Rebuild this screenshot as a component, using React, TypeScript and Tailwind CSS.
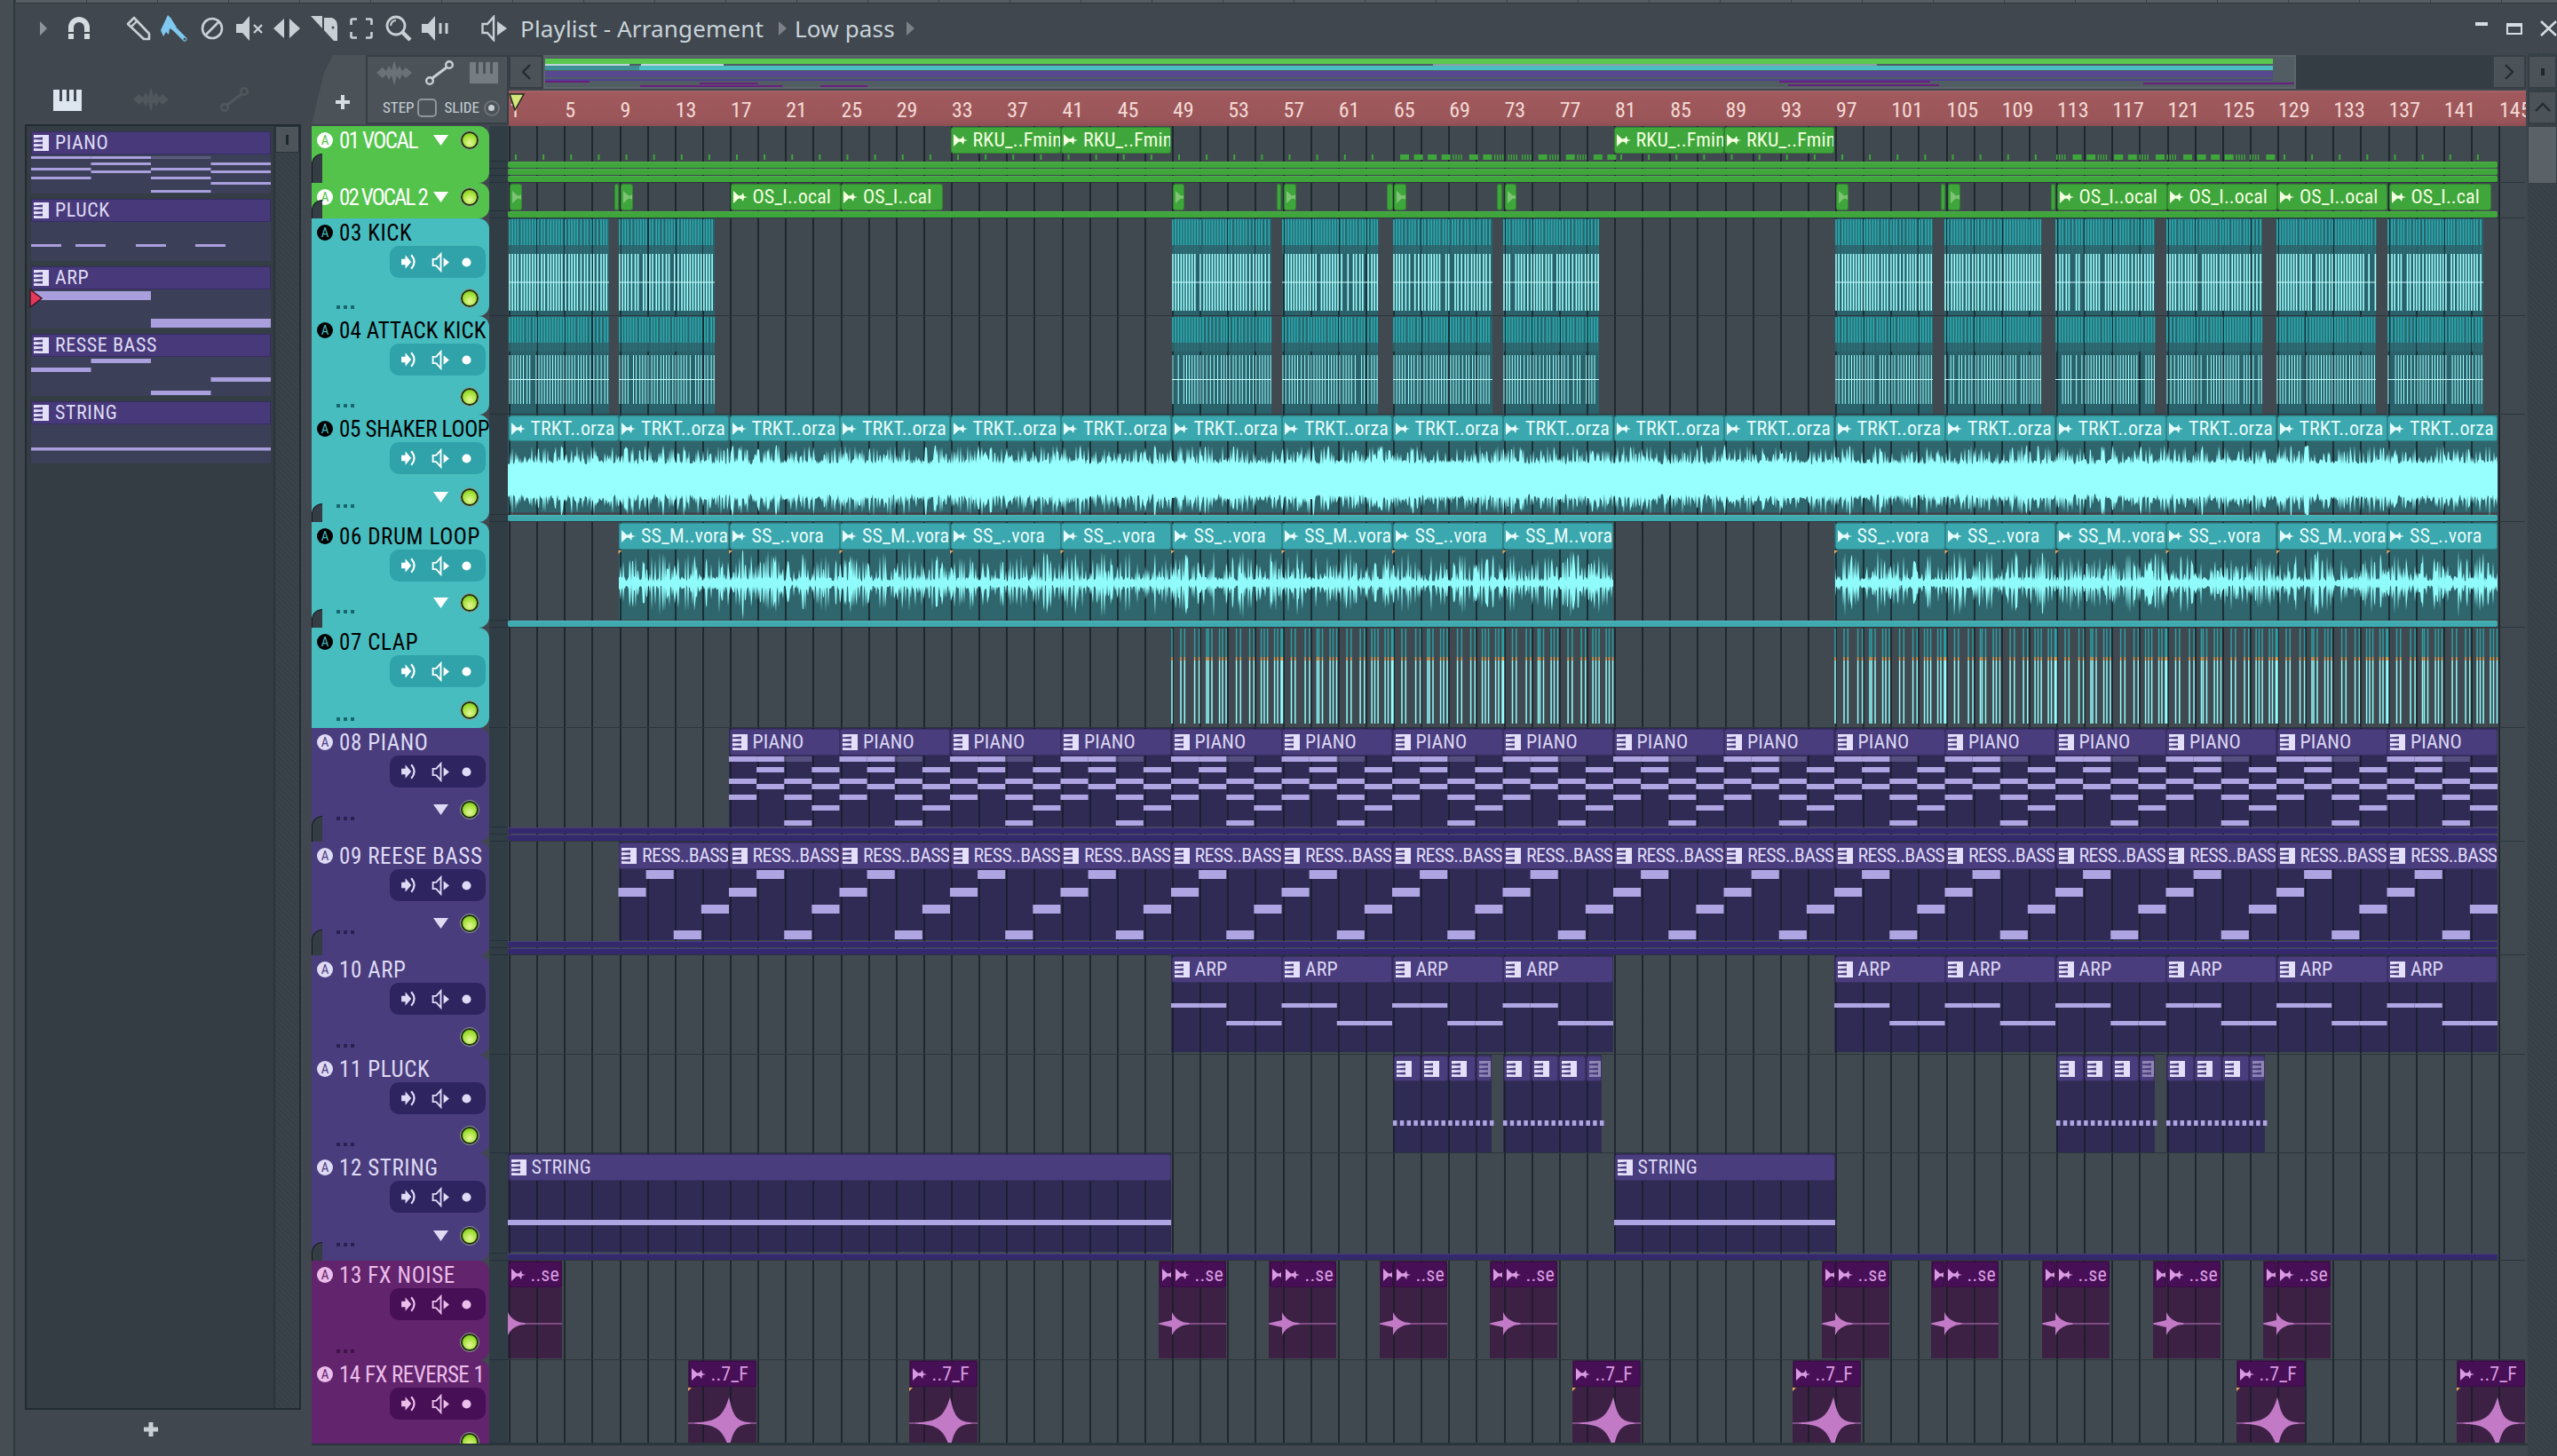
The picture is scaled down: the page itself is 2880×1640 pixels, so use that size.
import React from "react";

const BAR = 15.5625;
const CLIP8 = 124.5;
const bx = (b: number) => (b - 1) * BAR;
const NARROW = "font-['Roboto',sans-serif] [font-stretch:76%]";
const rng = (seed: number) => {
  let s = seed;
  return () => {
    s = (s * 16807) % 2147483647;
    return (s & 0xffff) / 65535;
  };
};

type ThemeKey = "green" | "teal" | "purple" | "magenta";
const THEMES: Record<ThemeKey, any> = {
  green: {
    bg: "bg-[#54c34b]", text: "text-white", badge: "bg-white text-[#54c34b]", panel: "", head: "bg-[#3ea63b]", icon: "text-white", dots: "bg-black",
    clipText: "text-[#f4ffe0]", body: "bg-[#3ea63b]", line: "bg-[#3ea63b]", fill: "#f4ffe0",
  },
  teal: {
    bg: "bg-[#47bdc0]", text: "text-black", badge: "bg-black text-[#47bdc0]", panel: "bg-[#2fa3a9]", head: "bg-[#3aa8ae]", icon: "text-white", dots: "bg-[#17686c]",
    clipText: "text-[#e6fbfb]", body: "bg-[#2f666d]", line: "bg-[#3fabb0]", fill: "#e6fbfb",
  },
  purple: {
    bg: "bg-[#4a3d7d]", text: "text-[#dfdbf5]", badge: "bg-[#dfdbf5] text-[#4a3d7d]", panel: "bg-[#2d2460]", head: "bg-[#4a3d7d]", icon: "text-[#dfdbf5]", dots: "bg-[#2a2150]",
    clipText: "text-[#dcd7f5]", body: "bg-[#302b55]", line: "bg-[#35296e]", fill: "#e4e0fa",
  },
  magenta: {
    bg: "bg-[#62246c]", text: "text-[#ebbeeb]", badge: "bg-[#ebbeeb] text-[#62246c]", panel: "bg-[#470f55]", head: "bg-[#470f55]", icon: "text-[#ebbeeb]", dots: "bg-[#41124a]",
    clipText: "text-[#d89ae0]", body: "bg-[#3d2145]", line: "bg-[#470f55]", fill: "#d89ae0",
  },
};

type Clip = { x: number; w: number; label?: string; icon?: "audio" | "piano"; dim?: boolean; noHead?: boolean };

const AudioIcon = ({ fill, dim }: { fill: string; dim?: boolean }) => (
  <svg width="16" height="14" viewBox="0 0 16 14" className="shrink-0" style={{ opacity: dim ? 0.35 : 1 }}>
    <path d="M0 0 L6 5.5 L9 5 L11 2 L12 6 L16 7 L12 8 L11 12 L9 9 L6 8.5 L0 14Z" fill={fill} />
  </svg>
);
const PianoIcon = ({ fill, dim }: { fill: string; dim?: boolean }) => (
  <svg width="17" height="18" viewBox="0 0 17 18" className="shrink-0" style={{ opacity: dim ? 0.45 : 1 }}>
    <path fillRule="evenodd" d="M0 0H17V18H0Z M0 3.5L10 2.5V5.5L0 5Z M0 8.5L10 7.5V10.5L0 10Z M0 13.5L10 12.5V15.5L0 15Z" fill={fill} />
  </svg>
);

const seq = (start: number, n: number, label: string | ((i: number) => string), icon: "audio" | "piano", step = CLIP8): Clip[] =>
  Array.from({ length: n }, (_, i) => ({ x: start + i * step, w: step, label: typeof label === "string" ? label : label(i), icon }));

const KICK_X: [number, number][] = [
  [1, 113], [125, 108], [748, 112], [872, 108], [997, 112], [1121, 108], [1495, 110], [1618, 109], [1743, 112], [1868, 108], [1992, 112], [2117, 108],
];

const kickDraw = (seed: number, y1: number, y2: number, sw: number) => {
  const r = rng(seed);
  let head = "", band = "", bright = "", mid = "";
  KICK_X.forEach(([x0, w]) => {
    let x = x0 + 1;
    while (x < x0 + w) {
      const tall = r() > 0.06;
      head += `M${x.toFixed(1)} 1V30`;
      band += `M${x.toFixed(1)} 30V40`;
      if (tall) bright += `M${x.toFixed(1)} ${y1}V${y2}`;
      x += r() > 0.75 ? 4.1 : 3.1;
    }
    mid += `M${x0} ${(y1 + y2) / 2}H${x0 + w}`;
  });
  return (
    <>
      <path d={head} stroke="#2aa8ad" strokeWidth="1.8" />
      <path d={band} stroke="#2f6f77" strokeWidth="1.6" />
      <path d={bright} stroke="#9dffff" strokeWidth={sw} />
      <path d={mid} stroke="#c8ffff" strokeWidth="1" />
    </>
  );
};

const CLAP = [0, 10, 14.3, 25.6, 30.6, 39, 41, 45, 53.6, 57, 61, 72.6, 77.3, 87.6, 92.3, 100.6, 104, 107.6, 115.6, 119, 123];
const clapDraw = () => {
  let a = "", o = "", b = "";
  [[748, 4], [1495, 6]].forEach(([x0, n]) => {
    for (let p = 0; p < n; p++) {
      CLAP.forEach((c) => {
        const x = (x0 + p * CLIP8 + c).toFixed(1);
        a += `M${x} 1V33`;
        o += `M${x} 33V37`;
        b += `M${x} 37V108`;
      });
    }
  });
  return (
    <>
      <path d={a} stroke="#2aa0a6" strokeWidth="1.5" />
      <path d={o} stroke="#d9a050" strokeWidth="1.5" />
      <path d={b} stroke="#90ffff" strokeWidth="1.5" />
    </>
  );
};

const wavePath = (ranges: [number, number][], cy: number, amp: (x: number, r: () => number) => number, seed: number) => {
  const r = rng(seed);
  let d = "";
  ranges.forEach(([x0, x1]) => {
    const top: string[] = [];
    const bot: string[] = [];
    for (let x = x0; x <= x1; x += 1) {
      const a = amp(x - x0, r);
      top.push(`${x.toFixed(1)} ${(cy - a).toFixed(1)}`);
      bot.unshift(`${x.toFixed(1)} ${(cy + a * (0.8 + r() * 0.3)).toFixed(1)}`);
    }
    d += "M" + top.concat(bot).join("L") + "Z";
  });
  return d;
};

const notePieces = (xs: number[], rows: [number, number, number, number?][]) => {
  const out: React.ReactNode[] = [];
  xs.forEach((x0, i) =>
    rows.forEach(([cx, y, h, op], j) =>
      out.push(<rect key={`${i}-${j}`} x={x0 + cx * 31.125} y={y} width={31.125} height={h} fill="#b0a5e3" opacity={op ?? 1} />)
    )
  );
  return out;
};

const xs = (cl: Clip[]) => cl.map((c) => c.x);

const PIANO_CLIPS = seq(bx(17), 16, "PIANO", "piano");
const REESE_CLIPS = seq(bx(9), 17, "RESS..BASS", "piano");
const ARP_CLIPS = [...seq(bx(49), 4, "ARP", "piano"), ...seq(bx(97), 6, "ARP", "piano")];
const PLUCK_CLIPS: Clip[] = [997, 1121, 1744, 1868].flatMap((g) =>
  [0, 1, 2, 3].map((i) => ({ x: g + i * 31.125, w: i === 3 ? 18 : 31.125, icon: "piano" as const, dim: i === 3 }))
);
const NOISE_X = [748, 872, 997, 1121, 1495, 1618, 1743, 1868, 1992];
const NOISE_CLIPS: Clip[] = [
  { x: 0, w: 61, label: "..se", icon: "audio" },
  ...NOISE_X.flatMap((x) => [
    { x: x - 15, w: 15, icon: "audio" as const },
    { x, w: 61, label: "..se", icon: "audio" as const },
  ]),
];
const REV_X = [203, 452, 1199, 1447, 1947, 2195];
const REV_CLIPS: Clip[] = REV_X.map((x) => ({ x, w: 77, label: "..7_F", icon: "audio" as const }));

const SHAKER: Clip[] = seq(0, 18, "TRKT..orza", "audio");
const DRUM_L1 = ["SS_M..vora", "SS_..vora", "SS_M..vora", "SS_..vora", "SS_..vora", "SS_..vora", "SS_M..vora", "SS_..vora", "SS_M..vora"];
const DRUM_L2 = ["SS_..vora", "SS_..vora", "SS_M..vora", "SS_..vora", "SS_M..vora", "SS_..vora"];
const DRUM: Clip[] = [...seq(bx(9), 9, (i) => DRUM_L1[i], "audio"), ...seq(bx(105) - 124.5, 6, (i) => DRUM_L2[i], "audio")];

const VOCAL2: Clip[] = [
  { x: 1, w: 15, icon: "audio", dim: true }, { x: 119, w: 6 }, { x: 126, w: 15, icon: "audio", dim: true },
  { x: 250, w: 124.5, label: "OS_I..ocal", icon: "audio" }, { x: 374.5, w: 115.5, label: "OS_I..cal", icon: "audio" },
  { x: 748, w: 14, icon: "audio", dim: true }, { x: 865, w: 6 }, { x: 873, w: 15, icon: "audio", dim: true },
  { x: 989, w: 8 }, { x: 997, w: 15, icon: "audio", dim: true }, { x: 1113, w: 7 }, { x: 1122, w: 14, icon: "audio", dim: true },
  { x: 1495, w: 15, icon: "audio", dim: true }, { x: 1613, w: 6 }, { x: 1621, w: 15, icon: "audio", dim: true }, { x: 1737, w: 6 },
  { x: 1744, w: 124.5, label: "OS_I..ocal", icon: "audio" }, { x: 1868, w: 124.5, label: "OS_I..ocal", icon: "audio" },
  { x: 1992.5, w: 124.5, label: "OS_I..ocal", icon: "audio" }, { x: 2118, w: 116, label: "OS_I..cal", icon: "audio" },
];

const ticksDraw = () => {
  const r = rng(77);
  const out: React.ReactNode[] = [];
  for (let x = 8; x < 2220; x += 31.125) {
    const dense = (x > 1000 && x < 1240) || (x > 1740 && x < 1985);
    if (!dense) out.push(<rect key={x} x={x} y={32} width={2} height={6} fill="#3ea63b" />);
  }
  [[1002, 1238], [1744, 1984]].forEach(([a, b]) => {
    for (let x = a; x < b; x += 15.56) {
      const k = r();
      if (k > 0.3) out.push(<rect key={`d${x}`} x={x + 3} y={32} width={10} height={6} fill="#3ea63b" />);
      else
        [0, 3, 6, 9].forEach((o) => out.push(<rect key={`d${x}-${o}`} x={x + o} y={32} width={1.5} height={6} fill="#3ea63b" />));
    }
  });
  return out;
};

const noisePath = (x: number, w: number, cy: number, up: number) => {
  let d = `M${x} ${cy - up}`;
  const n = 30;
  for (let i = 1; i <= n; i++) {
    const t = i / n;
    const a = Math.max(0.5, up * Math.exp(-t * 9));
    d += `L${(x + t * w).toFixed(1)} ${(cy - a).toFixed(1)}`;
  }
  for (let i = n; i >= 0; i--) {
    const t = i / n;
    const a = Math.max(0.5, up * Math.exp(-t * 9));
    d += `L${(x + t * w).toFixed(1)} ${(cy + a).toFixed(1)}`;
  }
  return d + "Z";
};
const revPath = (x: number, w: number, cy: number) => {
  const peak = x + w * 0.6;
  const f = (px: number) => {
    const p = px < peak ? peak - px : (px - peak) * 1.6;
    return Math.max(0.6, 21 * Math.exp(-p / 7) + 9 * Math.exp(-p / 14));
  };
  let top = "", bot = "";
  for (let px = x; px <= x + w; px += 1) {
    top += `L${px.toFixed(1)} ${(cy - f(px)).toFixed(1)}`;
    bot = `L${px.toFixed(1)} ${(cy + f(px)).toFixed(1)}` + bot;
  }
  return `M${x} ${cy}` + top + bot + "Z";
};

type Track = {
  num: string; name: string; theme: ThemeKey; h: number; panel: boolean; arrow: boolean; notch: number; lines: number;
  clips: Clip[]; headH: number; bodyH: number; draw?: React.ReactNode; fullH?: number; ls?: number;
};

const TRACKS: Track[] = [
  {
    num: "01", name: "VOCAL", theme: "green", h: 64, panel: false, arrow: true, notch: 33, lines: 3, headH: 31, bodyH: 0, ls: -1.5,
    clips: [...seq(bx(33), 2, "RKU_..Fmin", "audio"), ...seq(bx(81), 2, "RKU_..Fmin", "audio")], draw: ticksDraw(),
  },
  { num: "02", name: "VOCAL 2", theme: "green", h: 40, panel: false, arrow: true, notch: 21, lines: 1, headH: 31, bodyH: 0, clips: VOCAL2, ls: -1.9 },
  {
    num: "03", name: "KICK", theme: "teal", h: 110, panel: true, arrow: false, notch: 0, lines: 0, headH: 0, bodyH: 110,
    clips: KICK_X.map(([x, w]) => ({ x, w, noHead: true })), draw: kickDraw(12345, 40, 104, 1.6),
  },
  {
    num: "04", name: "ATTACK KICK", theme: "teal", h: 111, panel: true, arrow: false, notch: 0, lines: 0, headH: 0, bodyH: 111, ls: 0.1,
    clips: KICK_X.map(([x, w]) => ({ x, w, noHead: true })), draw: kickDraw(4242, 44, 99, 1),
  },
  {
    num: "05", name: "SHAKER LOOP", theme: "teal", h: 121, panel: true, arrow: true, notch: 21, lines: 1, headH: 30, bodyH: 110, clips: SHAKER, ls: -0.3,
    draw: <path fill="#98ffff" d={wavePath([[0, 2241]], 74, (x, r) => (r() > 0.6 ? 25 + r() * 15 : 18 + r() * 6), 999)} />,
  },
  {
    num: "06", name: "DRUM LOOP", theme: "teal", h: 119, panel: true, arrow: true, notch: 21, lines: 1, headH: 31, bodyH: 110, clips: DRUM,
    draw: (
      <>
        <path fill="#90fbfb" d={wavePath([[125, 1245], [1495, 2241]], 69, (x, r) => {
          const e = 0.5 + 0.5 * Math.abs(Math.sin((x / 31.125) * Math.PI));
          return r() > 0.55 ? 8 + r() * 30 * e : 2 + r() * 6;
        }, 555)} />
        {DRUM.map((c) => <path key={c.x} d={`M${c.x} 32h4l-4 4Z`} fill="#e8a55c" />)}
      </>
    ),
  },
  {
    num: "07", name: "CLAP", theme: "teal", h: 113, panel: true, arrow: false, notch: 0, lines: 0, headH: 0, bodyH: 0, clips: [], draw: clapDraw(),
  },
  {
    num: "08", name: "PIANO", theme: "purple", h: 128, panel: true, arrow: true, notch: 29, lines: 2, headH: 31, bodyH: 111, clips: PIANO_CLIPS,
    draw: notePieces(xs(PIANO_CLIPS), [
      [0, 32, 6], [1, 32, 6], [2, 32, 6, 0.3], [1, 44, 6], [3, 44, 6], [0, 57, 6], [2, 57, 6], [1, 63, 6], [3, 63, 6], [0, 75, 6], [2, 75, 6], [3, 87, 6], [2, 104, 6],
    ]),
  },
  {
    num: "09", name: "REESE BASS", theme: "purple", h: 128, panel: true, arrow: true, notch: 29, lines: 2, headH: 31, bodyH: 111, clips: REESE_CLIPS,
    draw: notePieces(xs(REESE_CLIPS), [[0, 52, 10], [1, 32, 10], [2, 100, 10], [3, 71, 10]]),
  },
  {
    num: "10", name: "ARP", theme: "purple", h: 112, panel: true, arrow: false, notch: 0, lines: 0, headH: 31, bodyH: 109, clips: ARP_CLIPS,
    draw: notePieces(xs(ARP_CLIPS), [[0, 54, 5], [1, 54, 5], [2, 74, 5], [3, 74, 5]]),
  },
  {
    num: "11", name: "PLUCK", theme: "purple", h: 111, panel: true, arrow: false, notch: 0, lines: 0, headH: 30, bodyH: 111, clips: PLUCK_CLIPS,
    draw: PLUCK_CLIPS.flatMap((c) =>
      [0, 1, 2, 3].filter((i) => i * 7.78 < c.w).map((i) => (
        <rect key={`${c.x}-${i}`} x={c.x + i * 7.78} y={74} width={4.5} height={6} fill="#b0a5e3" />
      ))
    ),
  },
  {
    num: "12", name: "STRING", theme: "purple", h: 121, panel: true, arrow: true, notch: 21, lines: 1, headH: 31, bodyH: 111,
    clips: [{ x: 0, w: 747, label: "STRING", icon: "piano" }, { x: 1246, w: 249, label: "STRING", icon: "piano" }],
    draw: (
      <>
        <rect x={0} y={75} width={747} height={6} fill="#b0a5e3" />
        <rect x={1246} y={75} width={249} height={6} fill="#b0a5e3" />
      </>
    ),
  },
  {
    num: "13", name: "FX NOISE", theme: "magenta", h: 112, panel: true, arrow: false, notch: 0, lines: 0, headH: 30, bodyH: 110, clips: NOISE_CLIPS,
    draw: (
      <>
        <path d={noisePath(0, 61, 71, 13)} fill="#c27ac6" />
        {NOISE_X.map((x) => <path key={x} d={noisePath(x, 61, 71, 13)} fill="#c27ac6" />)}
        {NOISE_X.map((x) => <path key={`t${x}`} d={`M${x - 15} 70.5L${x} 67V75L${x - 15} 71.5Z`} fill="#c27ac6" />)}
      </>
    ),
  },
  {
    num: "14", name: "FX REVERSE 1", theme: "magenta", h: 94, fullH: 112, panel: true, arrow: false, notch: 0, lines: 0, headH: 30, bodyH: 94, clips: REV_CLIPS, ls: -0.5,
    draw: (
      <>
        {REV_CLIPS.map((c) => <path key={c.x} d={revPath(c.x, c.w, 71)} fill="#c27ac6" />)}
        {REV_CLIPS.map((c) => <path key={`o${c.x}`} d={`M${c.x} 31h4l-4 4Z`} fill="#e8a55c" />)}
      </>
    ),
  },
];

const Led = () => (
  <div className="w-[20px] h-[20px] rounded-full shrink-0 border-[2px] border-[#20300f] outline outline-1 outline-[#8a9a90] bg-[radial-gradient(circle_at_50%_70%,#e4f79a_0%,#a6e23a_55%,#6fb81a_100%)]" />
);

const Arrow = () => (
  <svg width="17" height="12" viewBox="0 0 17 12" className="shrink-0 fill-current">
    <path d="M0 0H17L8.5 12Z" />
  </svg>
);

const MiniIcons = () => (
  <div className="flex items-center w-full pl-[12px] fill-current stroke-current">
    <svg width="20" height="20" viewBox="0 0 18 18">
      <path d="M1 6H5V2L11 9L5 16V12H1Z" stroke="none" />
      <path d="M11 2Q17 9 11 16" fill="none" strokeWidth="2" />
    </svg>
    <svg width="21" height="23" viewBox="0 0 20 22" className="ml-[15px]">
      <path d="M1.5 7.5H5L10 2V20L5 14.5H1.5Z" fill="none" strokeWidth="1.8" />
      <path d="M13 6L19 11L13 16Z" stroke="none" />
    </svg>
    <svg width="11" height="11" viewBox="0 0 12 12" className="ml-[13px]">
      <circle cx="6" cy="6" r="5.5" stroke="none" />
    </svg>
  </div>
);

const Header = ({ t }: { t: Track }) => {
  const th = THEMES[t.theme];
  const fullH = t.fullH ?? t.h;
  return (
    <div className={`relative w-[200px] rounded-r-[12px] overflow-hidden flex flex-col shrink-0 ${th.bg} ${th.text}`} style={{ height: fullH }}>
      <div className="flex items-center h-[30px] pl-[6px] mt-px shrink-0">
        <div className={`w-[18px] h-[18px] rounded-full flex items-center justify-center text-[15px] shrink-0 ${th.badge} ${NARROW}`}>A</div>
        <span className={`ml-[7px] text-[25px] leading-none whitespace-nowrap ${NARROW}`} style={{ letterSpacing: t.ls ?? 0.6 }}>
          {t.num} {t.name}
        </span>
        {!t.panel && (
          <div className="ml-auto mr-[12px] flex items-center gap-[14px]">
            <Arrow />
            <Led />
          </div>
        )}
      </div>
      {t.panel && (
        <>
          <div className={`ml-[88px] w-[108px] h-[36px] rounded-[10px] flex items-center shrink-0 ${th.panel} ${th.icon}`}>
            <MiniIcons />
          </div>
          <div className={`mt-auto flex items-center justify-end pr-[12px] ${th.icon}`} style={{ marginBottom: 10 + t.lines * 8 }}>
            {t.arrow && <div className="mr-[14px]"><Arrow /></div>}
            <Led />
          </div>
          <div className="absolute left-[28px] flex gap-[4px]" style={{ bottom: 8 + t.lines * 8 }}>
            <div className={`w-[4px] h-[4px] ${th.dots}`} />
            <div className={`w-[4px] h-[4px] ${th.dots}`} />
            <div className={`w-[4px] h-[4px] ${th.dots}`} />
          </div>
        </>
      )}
      {t.notch > 0 && (
        <div className="absolute left-0 bottom-0 w-[12px] rounded-tl-[12px] bg-[#343d44] border-l border-t border-black/60" style={{ height: t.notch }} />
      )}
    </div>
  );
};

const Lane = ({ t }: { t: Track }) => {
  const th = THEMES[t.theme];
  const h = t.h;
  return (
    <div className="relative isolate w-[2272px] shrink-0 h-full overflow-hidden border-b border-[#2b353c] bg-[#414950]">
      {t.bodyH > 0 &&
        t.clips.map((c, i) => (
          <div key={i} className={`absolute top-0 ${t.headH === 0 ? "bg-[#2a626b]" : th.body}`} style={{ left: c.x, width: c.w, height: t.bodyH }} />
        ))}
      <div className="absolute inset-0 z-[1] bg-[repeating-linear-gradient(90deg,transparent_0px,transparent_1px,rgba(20,28,36,0.75)_1px,rgba(20,28,36,0.75)_3px,transparent_3px,transparent_31.125px)]" />
      <svg className="absolute left-0 top-0 z-[2]" width="2272" height={h} viewBox={`0 0 2272 ${h}`}>
        {t.draw}
      </svg>
      {t.headH > 0 &&
        t.clips.map((c, i) => (
          <div
            key={i}
            className={`absolute top-px z-[3] rounded-[3px] border border-black/20 flex items-center pl-[2px] overflow-hidden whitespace-nowrap ${th.head} ${th.clipText}`}
            style={{ left: c.x + 0.5, width: c.w - 0.5, height: t.headH - 1 }}
          >
            {c.icon === "audio" && <AudioIcon fill={th.fill} dim={c.dim} />}
            {c.icon === "piano" && <PianoIcon fill={th.fill} dim={c.dim} />}
            {c.label && (
              <span
                className={`text-[22px] leading-none ml-[6px] ${NARROW}`}
                style={{ letterSpacing: c.label === "RESS..BASS" ? -0.7 : 0.1 }}
              >
                {c.label}
              </span>
            )}
          </div>
        ))}
      {t.lines > 0 && (
        <div className="absolute left-0 bottom-0 w-[2241px] z-[3] flex flex-col gap-px">
          {Array.from({ length: t.lines }, (_, i) => (
            <div key={i} className={`h-[7px] rounded-[2px] border-t border-white/10 ${th.line}`} />
          ))}
        </div>
      )}
    </div>
  );
};

const Row = ({ t }: { t: Track }) => (
  <div className="flex shrink-0 overflow-hidden" style={{ height: t.h }}>
    <Header t={t} />
    <div className="relative w-[21px] h-full shrink-0 bg-[#303d44] border-b border-[#24303a] flex flex-col justify-end">
      {Array.from({ length: t.lines }, (_, i) => (
        <div key={i} className="h-[8px] border-t border-[#24303a]" />
      ))}
    </div>
    <Lane t={t} />
  </div>
);

const C = "#c8d0d6";

const Toolbar = () => (
  <div className="h-[56px] flex items-center relative shrink-0">
    <svg width="8" height="16" viewBox="0 0 8 16" className="ml-[28px]"><path d="M0 0L8 8L0 16Z" fill="#8d959b" /></svg>
    <svg width="26" height="28" viewBox="0 0 26 28" className="ml-[23px]">
      <path d="M4 26V13a9 9 0 0 1 18 0V26" fill="none" stroke="#d5dce0" strokeWidth="6" />
      <path d="M1 19h6M19 19h6" stroke="#414950" strokeWidth="2" />
    </svg>
    <svg width="28" height="28" viewBox="0 0 28 28" className="ml-[40px]">
      <path d="M2 9L9 2L26 20V26H20Z" fill="none" stroke={C} strokeWidth="2.6" strokeLinejoin="round" />
      <path d="M5 13L13 5" stroke={C} strokeWidth="2.4" />
    </svg>
    <svg width="31" height="30" viewBox="0 0 31 30" className="ml-[11px]">
      <path d="M8 0L11 3L10 1L18 14L15 18L10 15L9 22L6 19L3 24L0 17Z" fill="#7fc9f0" />
      <path d="M17 17L27 27" stroke="#7fc9f0" strokeWidth="5" strokeLinecap="round" />
      <circle cx="27" cy="27" r="1.5" fill="#41494f" />
    </svg>
    <svg width="26" height="26" viewBox="0 0 26 26" className="ml-[14px]">
      <circle cx="13" cy="13" r="11" fill="none" stroke={C} strokeWidth="2.6" />
      <path d="M20 6L6 20" stroke={C} strokeWidth="2.6" />
    </svg>
    <svg width="31" height="30" viewBox="0 0 31 30" className="ml-[14px]">
      <path d="M0 10H7L15 1V29L7 20H0Z" fill={C} />
      <path d="M20 11L29 20M29 11L20 20" stroke={C} strokeWidth="2.4" />
    </svg>
    <svg width="30" height="24" viewBox="0 0 30 24" className="ml-[11px]">
      <path d="M0 12L12 1V23Z" fill={C} />
      <path d="M18 1L30 12L18 23Z" fill={C} />
      <path d="M14.5 0V24" stroke="#2f3940" strokeWidth="1.5" />
    </svg>
    <svg width="30" height="28" viewBox="0 0 30 28" className="ml-[12px]">
      <path d="M0 0H13V14Z" fill={C} />
      <path d="M15 2H24Q30 4 30 12V28H26L15 16Z" fill={C} />
      <circle cx="25" cy="13" r="1.5" fill="#414950" />
    </svg>
    <svg width="26" height="24" viewBox="0 0 26 24" className="ml-[14px]">
      <path d="M8 1.5H3Q1.5 1.5 1.5 3V8M18 1.5H23Q24.5 1.5 24.5 3V8M24.5 16V21Q24.5 22.5 23 22.5H18M8 22.5H3Q1.5 22.5 1.5 21V16" fill="none" stroke={C} strokeWidth="2.6" />
    </svg>
    <svg width="30" height="30" viewBox="0 0 30 30" className="ml-[14px]">
      <circle cx="12" cy="12" r="10" fill="none" stroke={C} strokeWidth="2.8" />
      <path d="M19 19L28 28" stroke={C} strokeWidth="4.5" />
      <path d="M12 6Q7 6 6 12" fill="none" stroke={C} strokeWidth="2" />
    </svg>
    <svg width="30" height="30" viewBox="0 0 30 30" className="ml-[11px]">
      <path d="M0 10H7L15 1V29L7 20H0Z" fill={C} />
      <path d="M21 9V21M28 9V21" stroke={C} strokeWidth="3" />
    </svg>
    <svg width="29" height="30" viewBox="0 0 29 30" className="ml-[37px]">
      <path d="M1.5 10H7L14 2V28L7 20H1.5Z" fill="none" stroke={C} strokeWidth="2.4" />
      <path d="M18 7L29 15L18 23Z" fill={C} />
    </svg>
    <span className="ml-[15px] text-[26px] tracking-[0.15px] leading-none text-[#c8d3da] font-['Noto_Sans',sans-serif] whitespace-nowrap">Playlist - Arrangement</span>
    <svg width="9" height="16" viewBox="0 0 9 16" className="ml-[17px]"><path d="M0 0L9 8L0 16Z" fill="#7a8288" /></svg>
    <span className="ml-[9px] text-[26px] tracking-[0.15px] leading-none text-[#c8d3da] font-['Noto_Sans',sans-serif] whitespace-nowrap">Low pass</span>
    <svg width="9" height="16" viewBox="0 0 9 16" className="ml-[13px]"><path d="M0 0L9 8L0 16Z" fill="#7a8288" /></svg>
    <div className="ml-auto flex items-center text-[#d6dde2]">
      <div className="w-[14px] h-[4px] bg-[#d6dde2] -mt-[10px]" />
      <div className="ml-[21px] w-[18px] h-[13px] border-2 border-t-[4px] border-[#d6dde2]" />
      <svg width="19" height="18" viewBox="0 0 19 18" className="ml-[20px]"><path d="M1 1L18 17M18 1L1 17" stroke="#d6dde2" strokeWidth="2.5" /></svg>
    </div>
  </div>
);

const BigPiano = ({ fill, cls }: { fill: string; cls?: string }) => (
  <svg width="32" height="24" viewBox="0 0 32 24" className={cls}>
    <path fillRule="evenodd" d="M0 0H32V24H0Z M7 0h3v13H7Z M15 0h3v13h-3Z M23 0h3v13h-3Z" fill={fill} />
  </svg>
);
const WaveStar = ({ fill, cls }: { fill: string; cls?: string }) => (
  <svg width="40" height="28" viewBox="0 0 40 28" className={cls}>
    <path d="M0 14L7 8L11 12L14 6L17 11L20 0L23 11L26 6L29 12L33 8L40 14L33 20L29 16L26 22L23 17L20 28L17 17L14 22L11 16L7 20Z" fill={fill} />
  </svg>
);
const NodeIcon = ({ stroke, cls }: { stroke: string; cls?: string }) => (
  <svg width="32" height="28" viewBox="0 0 32 28" className={cls}>
    <circle cx="5" cy="23" r="3.8" fill="none" stroke={stroke} strokeWidth="2.4" />
    <circle cx="27" cy="5" r="3.8" fill="none" stroke={stroke} strokeWidth="2.4" />
    <path d="M8 20L24 8" stroke={stroke} strokeWidth="3" />
  </svg>
);

type Thumb = { name: string; notes: [number, number, number, number, number?][] };
const THUMBS: Thumb[] = [
  {
    name: "PIANO",
    notes: [
      [0, 2, 67.5, 3], [67.5, 2, 67.5, 3], [135, 2, 67.5, 3, 0.3], [67.5, 9, 67.5, 3], [202.5, 9, 67.5, 3], [0, 15, 67.5, 3], [135, 15, 67.5, 3],
      [67.5, 18, 67.5, 3], [202.5, 18, 67.5, 3], [0, 25, 67.5, 3], [135, 25, 67.5, 3], [202.5, 31, 67.5, 3], [135, 40, 67.5, 3],
    ],
  },
  { name: "PLUCK", notes: [[0, 25, 34, 3], [50, 25, 34, 3], [118, 25, 34, 3], [185, 25, 34, 3]] },
  { name: "ARP", notes: [[0, 2, 135, 10], [135, 33, 135, 10]] },
  { name: "RESSE BASS", notes: [[67.5, 2, 67.5, 5], [0, 12, 67.5, 5], [202.5, 23, 67.5, 5], [135, 38, 67.5, 5]] },
  { name: "STRING", notes: [[0, 26, 270, 3.5]] },
];

const Picker = () => (
  <div className="w-[334px] shrink-0 flex flex-col h-full pl-[11px] pr-[12px]">
    <div className="h-[80px] shrink-0 flex items-start pt-[38px] pl-[32px]">
      <BigPiano fill="#dde6ee" cls="mt-[3px]" />
      <WaveStar fill="#50585e" cls="ml-[58px]" />
      <NodeIcon stroke="#50585e" cls="ml-[58px]" />
    </div>
    <div className="h-[1448px] shrink-0 bg-[#343d44] border-2 border-[#212b31] flex relative">
      <div className="w-[278px] shrink-0 pl-[5px] pt-[6px] flex flex-col gap-[6px]">
        {THUMBS.map((t) => (
          <div key={t.name} className="w-[270px] flex flex-col">
            <div className="h-[26px] bg-[#483a7a] border border-[#362c66] flex items-center pl-[2px] text-[#dfdbf5]">
              <PianoIcon fill="#e4e0fa" />
              <span className={`ml-[7px] text-[22px] leading-none tracking-[0.6px] ${NARROW}`}>{t.name}</span>
            </div>
            <svg width="270" height="44" viewBox="0 0 270 44" className="bg-[#3c3f58]">
              {t.notes.map((n, i) => (
                <rect key={i} x={n[0]} y={n[1]} width={n[2]} height={n[3]} fill="#a99fdc" opacity={n[4] ?? 1} />
              ))}
            </svg>
          </div>
        ))}
      </div>
      <div className="flex-1 border-l-2 border-[#2a343b] flex flex-col bg-[repeating-linear-gradient(45deg,#363f45_0px,#363f45_2px,#3a4349_2px,#3a4349_4px)]">
        <div className="h-[30px] bg-[#4d555b] border border-[#2a343b] flex items-center justify-center">
          <div className="w-[3px] h-[11px] bg-[#1e272c]" />
        </div>
      </div>
      <svg width="16" height="22" viewBox="0 0 16 22" className="absolute left-[3px] top-[183px]">
        <path d="M1 1L14 11L1 21Z" fill="#e6375c" stroke="#3a1a24" strokeWidth="1.5" />
      </svg>
    </div>
    <div className="flex-1 w-[284px] flex items-center justify-center pb-[8px]">
      <svg width="16" height="16" viewBox="0 0 16 16"><path d="M5.5 0H10.5V5.5H16V10.5H10.5V16H5.5V10.5H0V5.5H5.5Z" fill="#c8d0d6" /></svg>
    </div>
  </div>
);

const Overview = () => (
  <div className="w-[1974px] shrink-0 border-2 border-[#5b666b]">
    <svg width="1970" height="34" viewBox="0 0 1970 34" className="bg-[#525d63]">
      <rect x="0" y="2" width="1946" height="6" fill="#58c84e" />
      <rect x="0" y="10" width="1946" height="5" fill="#4bbec4" />
      <rect x="0" y="10" width="106" height="5" fill="#3f8f96" />
      <rect x="0" y="8" width="95" height="2" fill="#e0ffff" opacity="0.75" />
      <rect x="108" y="8" width="93" height="2" fill="#e0ffff" opacity="0.75" />
      <rect x="1000" y="8" width="500" height="2" fill="#e0ffff" opacity="0.4" />
      <rect x="0" y="16" width="1946" height="7" fill="#57498f" />
      <rect x="0" y="25" width="1946" height="2" fill="#4e3f96" />
      <rect x="0" y="27" width="50" height="2" fill="#6a1f7e" />
      <rect x="174" y="29" width="66" height="2" fill="#6a1f7e" />
      <rect x="107" y="32" width="160" height="2" fill="#6a1f7e" />
      <rect x="310" y="32" width="53" height="2" fill="#6a1f7e" />
      <rect x="1390" y="27" width="170" height="2" fill="#6a1f7e" />
      <rect x="1400" y="31" width="170" height="2" fill="#6a1f7e" />
      <rect x="1800" y="29" width="170" height="2" fill="#6a1f7e" />
    </svg>
  </div>
);

const RULER = Array.from({ length: 37 }, (_, i) => i * 4 + 1);

const Head = () => (
  <div className="flex h-[82px] shrink-0 pt-[2px]">
    <div className="w-[61px] shrink-0 h-[78px] relative bg-[#4b5359] [clip-path:polygon(24px_0,100%_0,100%_100%,0_100%,14px_20px)] flex items-end justify-center pb-[17px] pl-[8px]">
      <svg width="16" height="16" viewBox="0 0 16 16"><path d="M6 0H10V6H16V10H10V16H6V10H0V6H6Z" fill="#d6dde2" /></svg>
    </div>
    <div className="w-[161px] shrink-0 h-[78px] bg-[#4b5359] border-2 border-[#363f45] flex flex-col">
      <div className="flex items-center pl-[10px] pt-[4px]">
        <WaveStar fill="#6a7278" />
        <NodeIcon stroke="#c8d0d6" cls="ml-[15px]" />
        <BigPiano fill="#767d82" cls="ml-[18px]" />
      </div>
      <div className={`flex items-center pl-[17px] mt-[15px] text-[#c8d0d6] text-[17px] leading-none ${NARROW}`}>
        <span>STEP</span>
        <div className="ml-[3px] w-[22px] h-[21px] rounded-[5px] border-2 border-[#8f979d]" />
        <span className="ml-[9px]">SLIDE</span>
        <div className="ml-[5px] w-[18px] h-[18px] rounded-full border-2 border-[#6b7379] flex items-center justify-center">
          <div className="w-[7px] h-[7px] rounded-full bg-[#c8d0d6]" />
        </div>
      </div>
    </div>
    <div className="w-[2272px] shrink-0 flex flex-col gap-[2px]">
      <div className="h-[38px] flex shrink-0 bg-[#343d44]">
        <div className="w-[39px] shrink-0 bg-[#4b5359] border-2 border-[#363f45] flex items-center justify-center">
          <svg width="12" height="18" viewBox="0 0 12 18"><path d="M10 1L2 9L10 17" fill="none" stroke="#242c32" strokeWidth="2.4" /></svg>
        </div>
        <Overview />
        <div className="ml-auto w-[38px] shrink-0 bg-[#4b5359] border-2 border-[#363f45] flex items-center justify-center">
          <svg width="12" height="18" viewBox="0 0 12 18"><path d="M2 1L10 9L2 17" fill="none" stroke="#242c32" strokeWidth="2.4" /></svg>
        </div>
      </div>
      <div className={`relative h-[40px] shrink-0 flex overflow-hidden bg-[linear-gradient(#a8666a_0px,#a05a5e_3px,#9a5559_34px,#8c4f54_100%)] text-[#f4d9d4] text-[24px] leading-none ${NARROW}`}>
        {RULER.map((n) => (
          <div key={n} className="w-[62.25px] shrink-0 pl-[1px] pt-[10px] whitespace-nowrap">{n}</div>
        ))}
        <svg width="18" height="24" viewBox="0 0 18 24" className="absolute left-0 top-[2px]">
          <path d="M1 2H17L7 20Z" fill="#d4e77a" stroke="#1e2a20" strokeWidth="1.5" />
        </svg>
      </div>
    </div>
  </div>
);

const Scroll = () => (
  <div className="w-[33px] shrink-0 flex flex-col pt-[2px] gap-[2px] bg-[repeating-linear-gradient(45deg,#363f45_0px,#363f45_2px,#3a4349_2px,#3a4349_4px)]">
    <div className="h-[38px] shrink-0 bg-[#4b5359] border-2 border-[#363f45] flex items-center justify-center">
      <div className="w-[4px] h-[8px] bg-[#1e272c]" />
    </div>
    <div className="h-[38px] shrink-0 bg-[#4b5359] border-2 border-[#363f45] flex items-center justify-center">
      <svg width="18" height="12" viewBox="0 0 18 12"><path d="M1 10L9 2L17 10" fill="none" stroke="#242c32" strokeWidth="2.4" /></svg>
    </div>
    <div className="h-[65px] shrink-0 bg-[#5a6268] border border-[#363f45]" />
  </div>
);

export default function App() {
  return (
    <div className="w-[2880px] h-[1640px] flex overflow-hidden bg-[#40474e] font-['Liberation_Sans',sans-serif]">
      <div className="w-[17px] shrink-0 h-full bg-[#464d53] border-r-2 border-[#2e393f]" />
      <div className="flex-1 min-w-0 flex flex-col">
        <div className="h-[4px] shrink-0 bg-[#565d63] border-b border-[#2e393f] bg-[repeating-linear-gradient(90deg,#3a4248_0px,#3a4248_1px,transparent_1px,transparent_80px)]" />
        <Toolbar />
        <div className="flex flex-1 min-h-0">
          <Picker />
          <div className="w-[2496px] shrink-0 flex flex-col">
            <Head />
            <div className="flex flex-col border-b-2 border-[#2a343b]">
              {TRACKS.map((t) => <Row key={t.num} t={t} />)}
            </div>
          </div>
          <Scroll />
        </div>
      </div>
    </div>
  );
}
